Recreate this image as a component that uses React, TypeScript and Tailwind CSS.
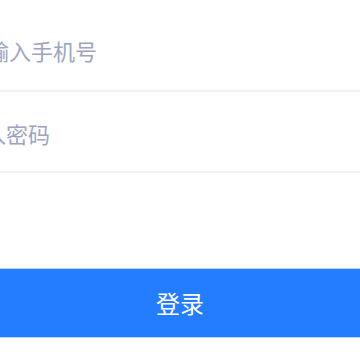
import React from 'react';

const font = { fontFamily: '"Noto Sans CJK SC", "Noto Sans", sans-serif' };

const InputRow: React.FC<{ placeholder: string; offset: string; type?: string; extra?: string }> = ({
  placeholder,
  offset,
  type = 'text',
  extra = '',
}) => (
  <div className={`h-[81px] flex items-center border-b-2 border-[#f2f2f2] ${extra}`}>
    <input
      type={type}
      placeholder={placeholder}
      className={`${offset} w-full bg-transparent outline-none text-[22px] text-[#333] placeholder:text-[#9ea4c0]`}
      style={font}
    />
  </div>
);

export default function App() {
  return (
    <div className="w-[360px] h-[360px] bg-white overflow-hidden" style={font}>
      <div className="pt-[11px]">
        <InputRow placeholder="请输入手机号" offset="ml-[-35px]" />
        <InputRow placeholder="请输入密码" offset="ml-[-60px]" type="password" extra="pt-[3px]" />
      </div>
      <button className="mt-[95px] w-full h-[70px] flex items-center justify-center bg-[#247cff] border-y border-[#b9d4ff] text-white text-[24px]">
        登录
      </button>
    </div>
  );
}
